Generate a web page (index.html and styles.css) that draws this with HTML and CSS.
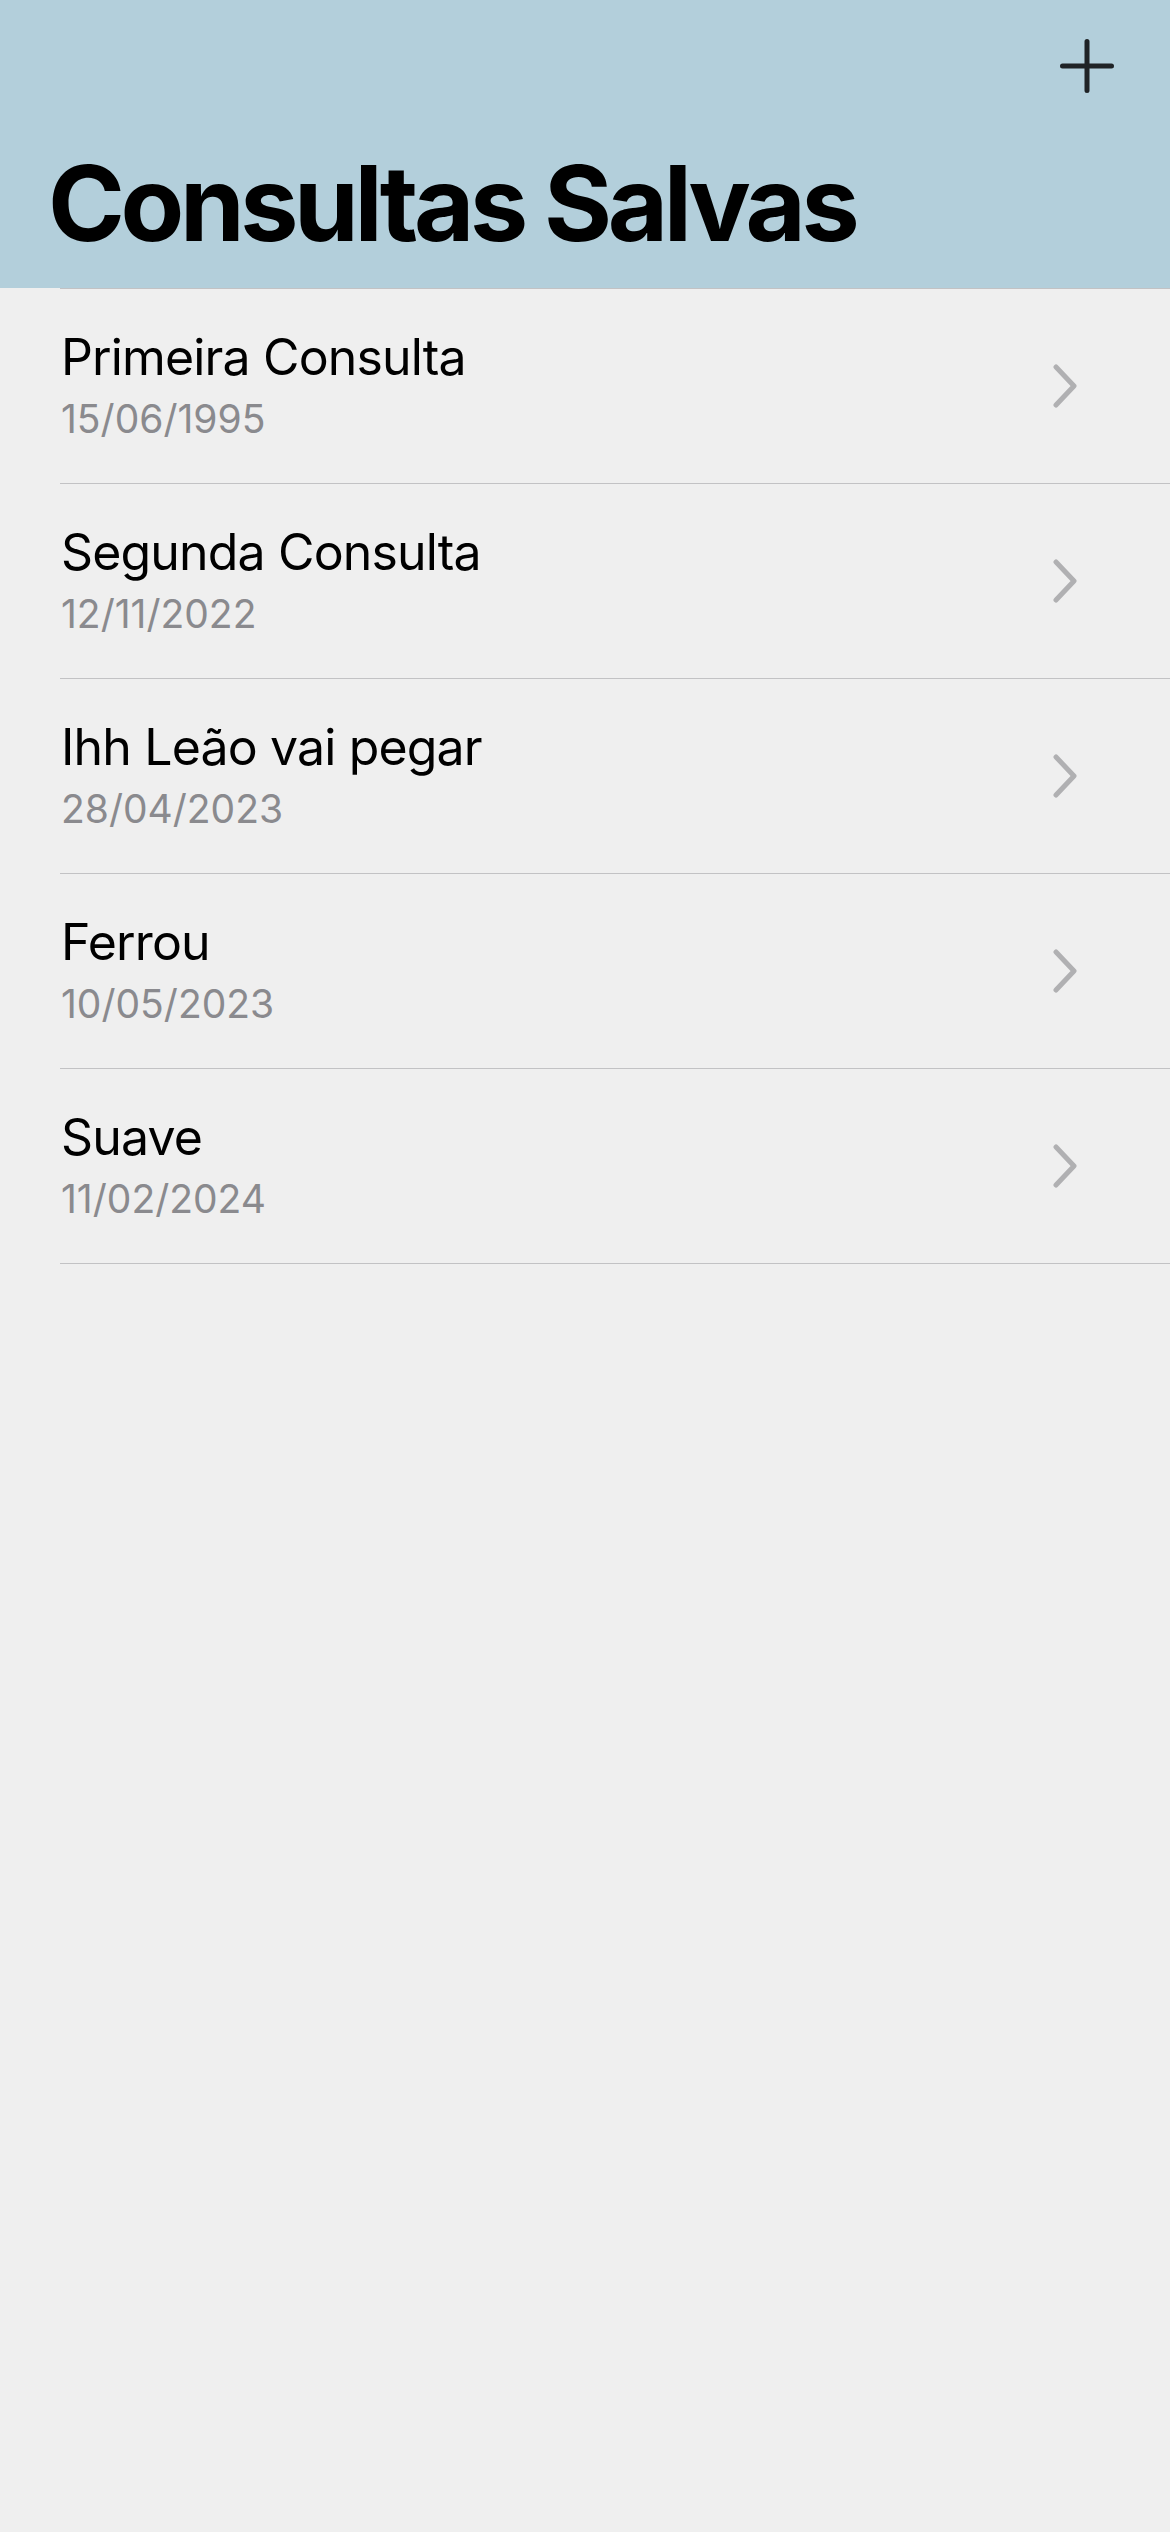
FILE: index.html
```html
<!DOCTYPE html>
<html lang="pt-BR">
<head>
<meta charset="utf-8">
<title>Consultas Salvas</title>
<link rel="stylesheet" href="styles.css">
</head>
<body>
<div class="app">
  <header class="header">
    <div class="nav">
      <button class="add" aria-label="Adicionar">
        <svg width="54" height="54" viewBox="0 0 54 54"><path d="M27 2.5V51.5M2.5 27H51.5" stroke="#1f2326" stroke-width="5" stroke-linecap="round" fill="none"/></svg>
      </button>
    </div>
    <h1 class="title">Consultas Salvas</h1>
  </header>
  <ul class="list">
    <li class="row">
      <div class="text"><div class="name">Primeira Consulta</div><div class="date">15/06/1995</div></div>
      <svg class="chev" width="24" height="44" viewBox="0 0 24 44"><path d="M3 3L21 22L3 41" stroke="#b0b0b2" stroke-width="5" stroke-linecap="round" stroke-linejoin="round" fill="none"/></svg>
    </li>
    <li class="row">
      <div class="text"><div class="name">Segunda Consulta</div><div class="date">12/11/2022</div></div>
      <svg class="chev" width="24" height="44" viewBox="0 0 24 44"><path d="M3 3L21 22L3 41" stroke="#b0b0b2" stroke-width="5" stroke-linecap="round" stroke-linejoin="round" fill="none"/></svg>
    </li>
    <li class="row">
      <div class="text"><div class="name">Ihh Leão vai pegar</div><div class="date">28/04/2023</div></div>
      <svg class="chev" width="24" height="44" viewBox="0 0 24 44"><path d="M3 3L21 22L3 41" stroke="#b0b0b2" stroke-width="5" stroke-linecap="round" stroke-linejoin="round" fill="none"/></svg>
    </li>
    <li class="row">
      <div class="text"><div class="name">Ferrou</div><div class="date">10/05/2023</div></div>
      <svg class="chev" width="24" height="44" viewBox="0 0 24 44"><path d="M3 3L21 22L3 41" stroke="#b0b0b2" stroke-width="5" stroke-linecap="round" stroke-linejoin="round" fill="none"/></svg>
    </li>
    <li class="row">
      <div class="text"><div class="name">Suave</div><div class="date">11/02/2024</div></div>
      <svg class="chev" width="24" height="44" viewBox="0 0 24 44"><path d="M3 3L21 22L3 41" stroke="#b0b0b2" stroke-width="5" stroke-linecap="round" stroke-linejoin="round" fill="none"/></svg>
    </li>
  </ul>
</div>
</body>
</html>
```
FILE: styles.css
```css
html, body {
  margin: 0;
  padding: 0;
  background: #efefef;
}
body {
  font-family: Inter, "Liberation Sans", Arial, sans-serif;
  color: #000;
  width: 1170px;
  min-height: 2532px;
}
.app {
  display: flex;
  flex-direction: column;
}
.header {
  background: #b3cfdb;
  height: 288px;
  box-sizing: border-box;
  display: flex;
  flex-direction: column;
  overflow: hidden;
}
.nav {
  display: flex;
  justify-content: flex-end;
  padding: 39px 56px 0 0;
}
.add {
  border: 0;
  background: none;
  padding: 0;
  width: 54px;
  height: 54px;
  display: block;
}
.add svg { display: block; }
.title {
  margin: 0;
  padding: 58px 0 0 48px;
  font-size: 104px;
  line-height: 104px;
  font-weight: 700;
  letter-spacing: -4.4px;
}
.list {
  list-style: none;
  margin: 0;
  padding: 0;
  border-top: 1px solid #c2c2c4;
  margin-left: 60px;
}
.row {
  height: 194px;
  border-bottom: 1px solid #c2c2c4;
  display: flex;
  align-items: center;
  justify-content: space-between;
  padding-right: 93px;
}
.text {
  display: flex;
  flex-direction: column;
  padding-left: 1px;
  padding-bottom: 3px;
}
.name {
  font-size: 50px;
  line-height: 60px;
  letter-spacing: -0.85px;
}
.date {
  font-size: 39px;
  line-height: 46px;
  margin-top: 9px;
  color: #8a8a8e;
}
.chev { display: block; }
```
